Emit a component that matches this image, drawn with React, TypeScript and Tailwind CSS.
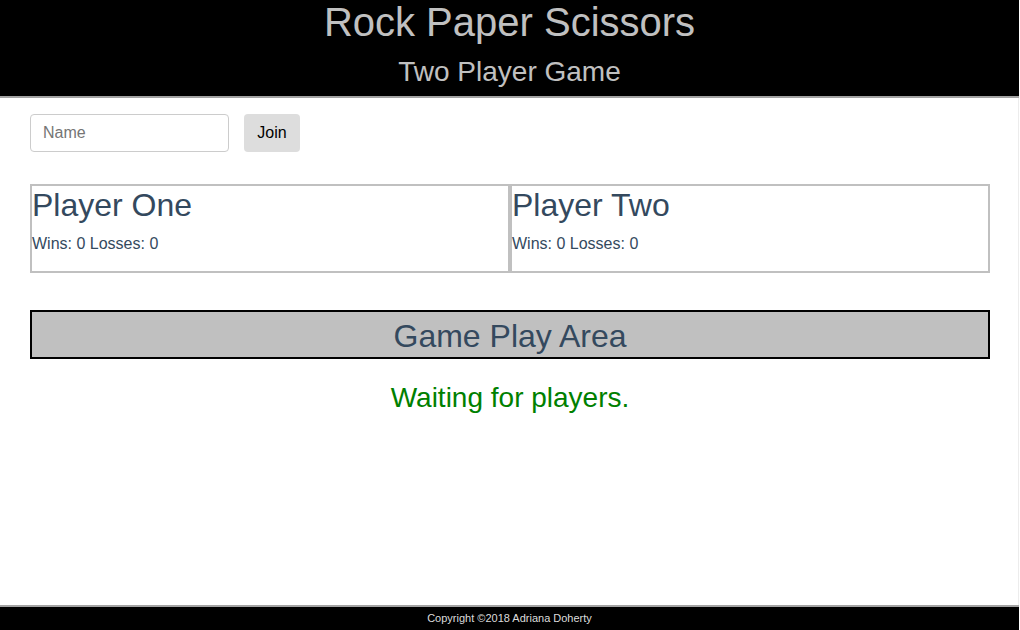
import { useState } from 'react';

function PlayerCard({ name, wins, losses }: { name: string; wins: number; losses: number }) {
  return (
    <div className="w-[480px] h-[89px] border-2 border-[#c0c0c0] text-[#34495e]">
      <h3 className="text-[32px] leading-[38px] m-0">{name}</h3>
      <p className="mt-[10px] text-[16px] leading-[20px]">
        Wins: {wins} Losses: {losses}
      </p>
    </div>
  );
}

export default function App() {
  const [name, setName] = useState('');

  return (
    <div className="w-[1019px] min-h-[630px] flex flex-col bg-white font-['Liberation_Sans',Arial,sans-serif]">
      <header className="bg-black text-[#c0c0c0] text-center pb-[8px] border-b-2 border-[#a3a3a3]">
        <h1 className="text-[40px] leading-[44px]">Rock Paper Scissors</h1>
        <h2 className="mt-[12px] text-[28px] leading-[32px]">Two Player Game</h2>
      </header>

      <main className="flex-1 px-[30px] pt-[16px] border-r border-[#ececec]">
        <div className="flex items-center gap-[15px]">
          <input
            value={name}
            onChange={e => setName(e.target.value)}
            placeholder="Name"
            className="w-[199px] h-[38px] px-[12px] text-[16px] border border-[#cccccc] rounded-[4px] placeholder:text-[#757575] outline-none"
          />
          <button className="w-[56px] h-[38px] bg-[#dddddd] rounded-[4px] text-[16px] text-black">Join</button>
        </div>

        <div className="mt-[32px] flex w-[960px]">
          <PlayerCard name="Player One" wins={0} losses={0} />
          <PlayerCard name="Player Two" wins={0} losses={0} />
        </div>

        <div className="mt-[37px] w-[960px] h-[49px] pt-[3px] border-2 border-black bg-[#c0c0c0] text-[#34495e] text-center text-[32px] leading-[42px]">
          Game Play Area
        </div>

        <p className="mt-[23px] w-[960px] text-center text-[28px] leading-[32px] text-[#008000]">
          Waiting for players.
        </p>
      </main>

      <footer className="bg-black border-t-2 border-[#a3a3a3] h-[25px] flex items-center justify-center text-[11px] text-[#dcdcdc]">
        Copyright ©2018 Adriana Doherty
      </footer>
    </div>
  );
}
